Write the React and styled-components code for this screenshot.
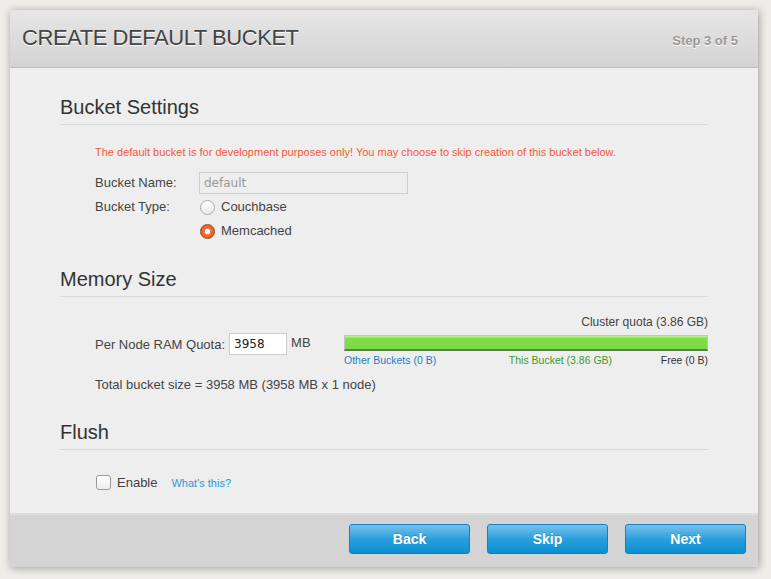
import React from "react";
import styled, { createGlobalStyle } from "styled-components";

const GlobalStyle = createGlobalStyle`
  html, body {
    margin: 0;
    padding: 0;
    background: #eeede7;
    font-family: "Liberation Sans", Arial, sans-serif;
    color: #333;
  }
`;

const App = () => {
  return (
    <>
      <GlobalStyle />
      <Page>
        <Dialog>
          <Header>
            <Title>CREATE DEFAULT BUCKET</Title>
            <Step>Step 3 of 5</Step>
          </Header>
          <Body>
            <Section>
              <Heading>Bucket Settings</Heading>
              <Warning>
                The default bucket is for development purposes only! You may
                choose to skip creation of this bucket below.
              </Warning>
              <FormGrid>
                <Label lh="22px">Bucket Name:</Label>
                <TextInput value="default" disabled readOnly width="209px" muted />
                <Label lh="16px">Bucket Type:</Label>
                <RadioList>
                  <RadioRow>
                    <Radio />
                    Couchbase
                  </RadioRow>
                  <RadioRow>
                    <Radio checked />
                    Memcached
                  </RadioRow>
                </RadioList>
              </FormGrid>
            </Section>

            <Section>
              <Heading>Memory Size</Heading>
              <MemoryRow>
                <QuotaField>
                  Per Node RAM Quota:
                  <TextInput value="3958" readOnly width="58px" />
                  <Unit>MB</Unit>
                </QuotaField>
                <Usage>
                  <UsageTitle>Cluster quota (3.86 GB)</UsageTitle>
                  <Bar>
                    <BarFill style={{ width: "100%" }} />
                  </Bar>
                  <BarLegend>
                    <LegendItem color="#1e7fbf">Other Buckets (0 B)</LegendItem>
                    <LegendItem color="#3e9a1e" shift="24px">This Bucket (3.86 GB)</LegendItem>
                    <LegendItem color="#333">Free (0 B)</LegendItem>
                  </BarLegend>
                </Usage>
              </MemoryRow>
              <Total>Total bucket size = 3958 MB (3958 MB x 1 node)</Total>
            </Section>

            <Section>
              <Heading>Flush</Heading>
              <FlushRow>
                <Check />
                <span>Enable</span>
                <HelpLink href="#">What's this?</HelpLink>
              </FlushRow>
            </Section>
          </Body>
          <Footer>
            <Button>Back</Button>
            <Button>Skip</Button>
            <Button>Next</Button>
          </Footer>
        </Dialog>
      </Page>
    </>
  );
};

export default App;

const Page = styled.div`
  width: 771px;
  height: 579px;
  padding: 10px 0 0 10px;
  box-sizing: border-box;
`;

const Dialog = styled.div`
  width: 748px;
  height: 557px;
  display: flex;
  flex-direction: column;
  background: #eeeeee;
  box-shadow: 1px 1px 8px rgba(0, 0, 0, 0.35);
`;

const Header = styled.div`
  height: 57px;
  flex-shrink: 0;
  display: flex;
  align-items: center;
  justify-content: space-between;
  padding: 0 20px 0 12px;
  background: linear-gradient(#e6e6e6, #d3d3d3);
  border-bottom: 1px solid #bcbcc6;
`;

const Title = styled.h1`
  margin: 0 0 2px 0;
  font-size: 22px;
  font-weight: normal;
  letter-spacing: -0.45px;
  color: #444;
  text-shadow: 0 1px 0 #fff;
`;

const Step = styled.div`
  font-size: 13px;
  font-weight: bold;
  color: #999;
  margin-top: 4px;
  text-shadow: 0 1px 0 #fff;
`;

const Body = styled.div`
  flex: 1;
  min-height: 0;
  overflow: hidden;
  padding: 27px 50px 0 50px;
`;

const Section = styled.div`
  margin-bottom: 28px;
  &:last-child {
    margin-bottom: 0;
  }
`;

const Heading = styled.h2`
  margin: 0;
  font-size: 20px;
  font-weight: normal;
  line-height: 24px;
  padding-bottom: 5px;
  border-bottom: 1px solid #d5d9d9;
  color: #333;
`;

const Warning = styled.p`
  margin: 20px 0 13px 35px;
  font-size: 11px;
  line-height: 14px;
  color: #f25a3c;
`;

const FormGrid = styled.div`
  display: grid;
  grid-template-columns: 104px auto;
  row-gap: 5px;
  margin-left: 35px;
  align-items: start;
`;

const Label = styled.div`
  font-size: 13px;
  line-height: ${(p) => p.lh};
  color: #444;
`;

const TextInput = styled.input`
  box-sizing: border-box;
  width: ${(p) => p.width};
  height: 22px;
  padding: 2px 4px;
  border: 1px solid ${(p) => (p.muted ? "#ccd0d0" : "#ccc")};
  background: ${(p) => (p.muted ? "#eeeeee" : "#fff")};
  font-family: "DejaVu Sans", Verdana, sans-serif;
  font-size: 12px;
  color: ${(p) => (p.muted ? "#999" : "#222")};
  outline: none;
`;

const RadioList = styled.div`
  display: flex;
  flex-direction: column;
  gap: 8px;
`;

const RadioRow = styled.label`
  display: flex;
  align-items: center;
  gap: 6px;
  padding-left: 1px;
  font-size: 13px;
  line-height: 16px;
  color: #444;
`;

const Radio = styled.span`
  width: 15px;
  height: 15px;
  box-sizing: border-box;
  border-radius: 50%;
  border: 1px solid ${(p) => (p.checked ? "#a4441c" : "#aaa")};
  background: ${(p) =>
    p.checked
      ? "radial-gradient(circle, #fff 0 2.5px, #e97a45 3px, #c9521d 100%)"
      : "linear-gradient(#fff, #e8e8e8)"};
`;

const MemoryRow = styled.div`
  display: flex;
  justify-content: space-between;
  align-items: flex-start;
  margin-top: 18px;
  padding-left: 35px;
`;

const QuotaField = styled.div`
  display: flex;
  align-items: center;
  gap: 4px;
  margin-top: 18px;
  font-size: 13px;
  color: #444;
`;

const Unit = styled.span`
  align-self: flex-start;
  margin-top: 2px;
`;

const Usage = styled.div`
  width: 364px;
`;

const UsageTitle = styled.div`
  text-align: right;
  font-size: 12px;
  line-height: 15px;
  color: #444;
  margin-bottom: 5px;
`;

const Bar = styled.div`
  height: 16px;
  box-sizing: border-box;
  border: 1px solid #c4c4c4;
  border-bottom: 2px solid #5c7e4a;
  background: #e8e8e8;
`;

const BarFill = styled.div`
  height: 100%;
  background: linear-gradient(#b6ef8c 0, #b6ef8c 1px, #84dc4a 2px, #7ad944 100%);
`;

const BarLegend = styled.div`
  display: flex;
  justify-content: space-between;
  margin-top: 3px;
`;

const LegendItem = styled.span`
  font-size: 10.5px;
  line-height: 13px;
  color: ${(p) => p.color};
  margin-left: ${(p) => p.shift || "0"};
`;

const Total = styled.div`
  margin: 10px 0 0 35px;
  font-size: 13px;
  line-height: 15px;
  color: #444;
`;

const FlushRow = styled.div`
  display: flex;
  align-items: center;
  margin: 25px 0 0 36px;
  font-size: 13px;
  color: #444;
`;

const Check = styled.span`
  width: 15px;
  height: 15px;
  box-sizing: border-box;
  border: 1px solid #999;
  border-radius: 3px;
  background: linear-gradient(#fff, #ececec);
  margin-right: 6px;
`;

const HelpLink = styled.a`
  margin-left: 14px;
  font-size: 11px;
  color: #1f9ad6;
  text-decoration: none;
`;

const Footer = styled.div`
  height: 54px;
  flex-shrink: 0;
  display: flex;
  align-items: flex-start;
  justify-content: flex-end;
  gap: 17px;
  padding: 9px 12px 0 0;
  background: #d4d4d4;
  border-top: 2px solid #dedede;
  box-sizing: border-box;
`;

const Button = styled.button`
  width: 121px;
  height: 30px;
  border: 1px solid #1b7dbf;
  border-radius: 3px;
  background: linear-gradient(#76c2ec, #2a9fdc 50%, #0890d2);
  color: #fff;
  font-family: "Liberation Sans", Arial, sans-serif;
  font-size: 14px;
  font-weight: bold;
  text-shadow: 0 -1px 0 rgba(0, 0, 0, 0.15);
  cursor: pointer;
`;
